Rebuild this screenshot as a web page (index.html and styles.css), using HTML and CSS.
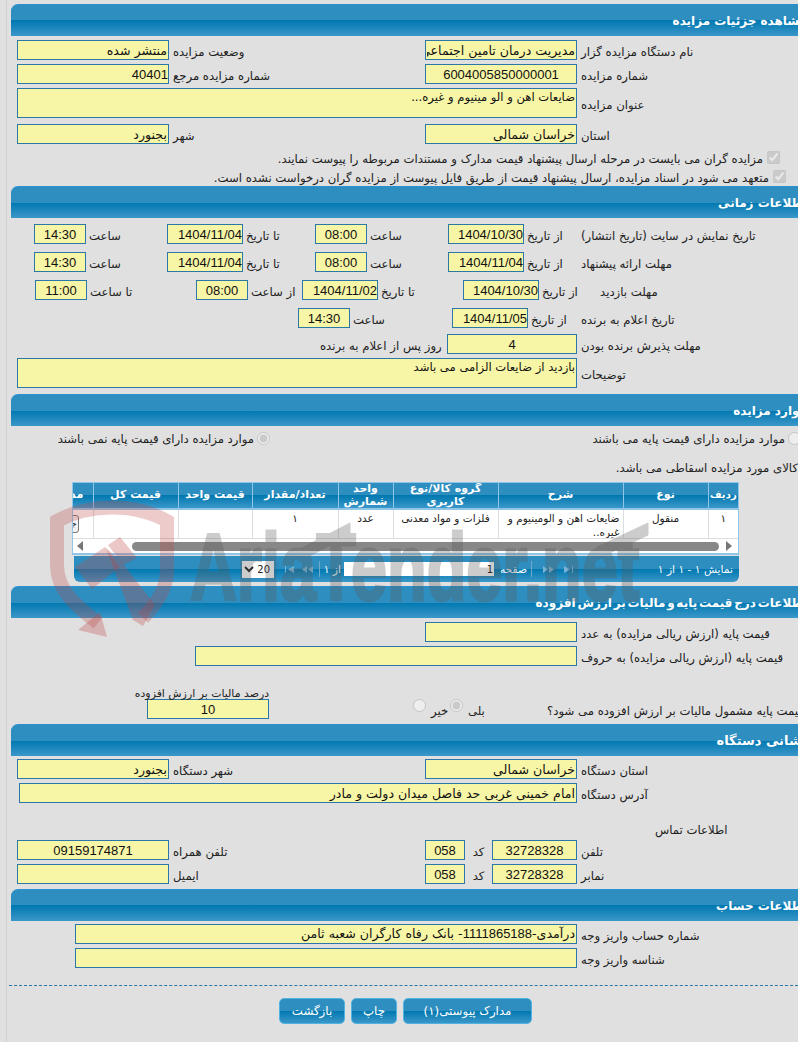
FILE: index.html
```html
<!DOCTYPE html>
<html lang="fa">
<head>
<meta charset="utf-8">
<title>مشاهده جزئیات مزایده</title>
<link rel="stylesheet" href="styles.css">
</head>
<body>
<main class="page">

<section class="sec first">
  <h2 class="sec-title">مشاهده جزئیات مزایده</h2>
  <div class="body b1">
    <div class="row two">
      <input class="f" readonly dir="rtl" value="منتشر شده"><label>وضعیت مزایده</label>
      <input class="f" readonly dir="rtl" value="مدیریت درمان تامین اجتماعی خراسان شمالی"><label>نام دستگاه مزایده گزار</label>
    </div>
    <div class="row two">
      <input class="f n" readonly dir="rtl" value="40401"><label>شماره مزایده مرجع</label>
      <input class="f n c" readonly value="6004005850000001"><label>شماره مزایده</label>
    </div>
    <div class="row wide tall">
      <textarea class="f area" readonly dir="rtl">ضایعات اهن و الو مینیوم و غیره...</textarea><label>عنوان مزایده</label>
    </div>
    <div class="row two">
      <input class="f" readonly dir="rtl" value="بجنورد"><label>شهر</label>
      <input class="f" readonly dir="rtl" value="خراسان شمالی"><label>استان</label>
    </div>
    <div class="check c1"><input type="checkbox" checked disabled><span>مزایده گران می بایست در مرحله ارسال پیشنهاد قیمت مدارک و مستندات مربوطه را پیوست نمایند.</span></div>
    <div class="check c2"><input type="checkbox" checked disabled><span>متعهد می شود در اسناد مزایده، ارسال پیشنهاد قیمت از طریق فایل پیوست از مزایده گران درخواست نشده است.</span></div>
  </div>
</section>

<section class="sec">
  <h2 class="sec-title">اطلاعات زمانی</h2>
  <div class="body b2">
    <div class="row t-a">
      <input class="f n c" readonly value="14:30"><label>ساعت</label>
      <input class="f n" readonly dir="rtl" value="1404/11/04"><label>تا تاریخ</label>
      <input class="f n c" readonly value="08:00"><label>ساعت</label>
      <input class="f n" readonly dir="rtl" value="1404/10/30"><label>از تاریخ</label>
      <label>تاریخ نمایش در سایت (تاریخ انتشار)</label>
    </div>
    <div class="row t-a">
      <input class="f n c" readonly value="14:30"><label>ساعت</label>
      <input class="f n" readonly dir="rtl" value="1404/11/04"><label>تا تاریخ</label>
      <input class="f n c" readonly value="08:00"><label>ساعت</label>
      <input class="f n" readonly dir="rtl" value="1404/11/04"><label>از تاریخ</label>
      <label>مهلت ارائه پیشنهاد</label>
    </div>
    <div class="row t-b">
      <input class="f n c" readonly value="11:00"><label>تا ساعت</label>
      <input class="f n c" readonly value="08:00"><label>از ساعت</label>
      <input class="f n" readonly dir="rtl" value="1404/11/02"><label>تا تاریخ</label>
      <input class="f n" readonly dir="rtl" value="1404/10/30"><label>از تاریخ</label>
      <label>مهلت بازدید</label>
    </div>
    <div class="row t-c">
      <input class="f n c" readonly value="14:30"><label>ساعت</label>
      <input class="f n" readonly dir="rtl" value="1404/11/05"><label>از تاریخ</label>
      <label>تاریخ اعلام به برنده</label>
    </div>
    <div class="row t-d">
      <label class="end">روز پس از اعلام به برنده</label>
      <input class="f n c" readonly value="4"><label>مهلت پذیرش برنده بودن</label>
    </div>
    <div class="row wide tall">
      <textarea class="f area" readonly dir="rtl">بازدید از ضایعات الزامی می باشد</textarea><label>توضیحات</label>
    </div>
  </div>
</section>

<section class="sec">
  <h2 class="sec-title">موارد مزایده</h2>
  <div class="body b3">
    <div class="radios">
      <span>موارد مزایده دارای قیمت پایه نمی باشند</span><input type="radio" name="p" checked disabled>
      <span>موارد مزایده دارای قیمت پایه می باشند</span><input type="radio" name="p2" disabled>
    </div>
    <p class="note">کالای مورد مزایده اسقاطی می باشد.</p>
    <div class="grid">
      <table dir="rtl">
        <colgroup><col class="g1"><col class="g2"><col class="g3"><col class="g4"><col class="g5"><col class="g6"><col class="g7"><col class="g8"><col class="g9"></colgroup>
        <thead><tr><th>ردیف</th><th>نوع</th><th>شرح</th><th>گروه کالا/نوع کاربری</th><th>واحد شمارش</th><th>تعداد/مقدار</th><th>قیمت واحد</th><th>قیمت کل</th><th>مدارک</th></tr></thead>
        <tbody><tr><td>۱</td><td>منقول</td><td class="desc"><div class="clamp">ضایعات اهن و الومینیوم و غیره..</div></td><td>فلزات و مواد معدنی</td><td>عدد</td><td>۱</td><td></td><td></td><td class="btn-cell"><button class="mini">جزئیات</button></td></tr></tbody>
      </table>
      <div class="hscroll"><i class="arr-l"></i><b class="thumb"></b><i class="arr-r"></i></div>
    </div>
    <div class="pager">
      <select class="pg-size" dir="rtl"><option>20</option></select>
      <svg class="ic i1" viewBox="0 0 9 7"><path d="M0 0h1v7H0zM9 0v7L3 3.500z"/></svg>
      <svg class="ic i2" viewBox="0 0 11 7"><path d="M5 0v7L0 3.500zM11 0v7L6 3.500z"/></svg>
      <span class="sep s1"></span>
      <span class="pg-t t1">از ۱</span>
      <input class="pg-in" readonly dir="rtl" value="1">
      <span class="pg-t t2">صفحه</span>
      <span class="sep s2"></span>
      <svg class="ic i3" viewBox="0 0 11 7"><path d="M0 0v7l5-3.500zM6 0v7l5-3.500z"/></svg>
      <svg class="ic i4" viewBox="0 0 9 7"><path d="M0 0v7l6-3.500zM8 0h1v7H8z"/></svg>
      <span class="pg-info">نمایش ۱ - ۱ از ۱</span>
    </div>
  </div>
</section>

<section class="sec">
  <h2 class="sec-title tight">اطلاعات درج قیمت پایه و مالیات بر ارزش افزوده</h2>
  <div class="body b4">
    <div class="row p-a"><input class="f" readonly><label>قیمت پایه (ارزش ریالی مزایده) به عدد</label></div>
    <div class="row p-b"><input class="f" readonly><label>قیمت پایه (ارزش ریالی مزایده) به حروف</label></div>
    <div class="row tax">
      <div class="tax-cell"><span class="tax-cap">درصد مالیات بر ارزش افزوده</span><input class="f n c" readonly value="10"></div>
      <span></span>
      <input type="radio" name="v" disabled><label>خیر</label>
      <input type="radio" name="v" checked disabled><label>بلی</label>
      <label>قیمت پایه مشمول مالیات بر ارزش افزوده می شود؟</label>
    </div>
  </div>
</section>

<section class="sec">
  <h2 class="sec-title loose">نشانی دستگاه</h2>
  <div class="body b5">
    <div class="row two">
      <input class="f" readonly dir="rtl" value="بجنورد"><label>شهر دستگاه</label>
      <input class="f" readonly dir="rtl" value="خراسان شمالی"><label>استان دستگاه</label>
    </div>
    <div class="row addr"><input class="f" readonly dir="rtl" value="امام خمینی غربی حد فاصل میدان دولت و مادر"><label>آدرس دستگاه</label></div>
    <p class="contact">اطلاعات تماس</p>
    <div class="row tel">
      <input class="f n c" readonly value="09159174871"><label>تلفن همراه</label>
      <input class="f n c" readonly value="058"><label class="mid">کد</label>
      <input class="f n c" readonly value="32728328"><label>تلفن</label>
    </div>
    <div class="row tel">
      <input class="f" readonly><label>ایمیل</label>
      <input class="f n c" readonly value="058"><label class="mid">کد</label>
      <input class="f n c" readonly value="32728328"><label>نمابر</label>
    </div>
  </div>
</section>

<section class="sec">
  <h2 class="sec-title">اطلاعات حساب</h2>
  <div class="body b6">
    <div class="row acc"><div class="f line" dir="rtl">درآمدی-<span class="d">1111865188</span>- بانک رفاه کارگران شعبه ثامن</div><label>شماره حساب واریز وجه</label></div>
    <div class="row acc"><input class="f" readonly><label>شناسه واریز وجه</label></div>
  </div>
</section>

<div class="actions">
  <button class="act a-back">بازگشت</button>
  <button class="act a-print">چاپ</button>
  <button class="act a-docs">مدارک پیوستی(۱)</button>
</div>
</main>

<svg class="wm" viewBox="0 0 798 700" aria-hidden="true">
  <g class="wm-logo">
    <path class="wm-line" d="M98 623C75 605 57 590 57 565V521C90 503 135 503 167 521V570C167 590 155 605 143 618"/>
    <path d="M106 548L120 560L155 605L143 626L133 620zM107 637L100 612L78 630z"/>
    <path d="M75 567L105 547L120 567L92 589zM108 545L120 537L137 558L123 565z"/>
  </g>
  <g class="wm-word">
    <text class="wm-text" transform="translate(190 600) scale(.69 1)">AriaTender.net</text>
    <path d="M298 550L350 523L350 535L298 562zM597 547L648 523L648 535L597 559z"/>
  </g>
</svg>
</body>
</html>
```
FILE: styles.css
```css
* { box-sizing: border-box; }
html, body { margin: 0; height: 1042px; overflow: hidden; background: #e0e0e0; }
body { position: relative; font-family: "DejaVu Sans", sans-serif; font-size: 11.7px; color: #222; }
.page { width: 805px; margin-left: 6px; padding: 4px 0 0 4px; border-left: 1px solid #cfcfcf; height: 1042px; }

.sec-title {
  margin: 0; height: 32px; line-height: 32px; padding-right: 4px;
  direction: rtl; font-size: 12px; font-weight: bold; color: #fff;
  background: linear-gradient(#2e8ebf 0, #2e8ebf 50%, #0078b0 50%, #3b97c9 100%);
  border-top: 1px solid #2b90d0; border-top-left-radius: 7px;
}
.sec-title.tight { word-spacing: -2.4px; }
.sec-title.loose { font-size: 13px; }
.b1 { height: 150px; padding-top: 4px; }
.b2 { height: 176px; padding-top: 6px; }
.b3 { height: 160px; }
.b4 { height: 106px; padding-top: 4px; }
.b5 { height: 133px; padding-top: 3px; }
.b6 { padding-top: 3px; }

.row { display: grid; height: 20px; margin-bottom: 4px; align-items: center; }
.row label { padding-left: 4px; white-space: nowrap; direction: rtl; text-align: left; padding-top: 3px; }
.f {
  width: 100%; height: 20px; padding: 0 1px; border: 1px solid #2b78a8; border-radius: 0; outline: 0;
  background: #f7f5a6; color: #111; font: 12.6px "DejaVu Sans", sans-serif;
}
.f.n { padding: 0; font: 13px "Liberation Sans", sans-serif; }
.f.c { text-align: center; }
.line { line-height: 18px; white-space: nowrap; overflow: hidden; }
.d { font: 13px "Liberation Sans", sans-serif; }
.area { display: block; height: 30px; padding-top: 2px; resize: none; overflow: hidden; line-height: 13px; font-size: 11.6px; }

.two { margin-left: 6px; grid-template-columns: 152px 256px 152px auto; }
.wide { margin-left: 6px; grid-template-columns: 560px auto; }
.tall { height: 30px; margin-bottom: 6px; }

.check { display: flex; direction: rtl; height: 19px; align-items: center; }
.check input { margin: 0 0 0 4px; width: 13px; height: 13px; flex: none; }
.check span { padding-top: 3px; white-space: nowrap; }
.c1 { padding-right: 31px; }
.c2 { padding-right: 25px; }

.t-a { margin-left: 23px; margin-bottom: 8px; grid-template-columns: 52px 81px 76px 72px 52px 81px 76px 57px auto; }
.t-b { margin-left: 24px; margin-bottom: 8px; grid-template-columns: 52px 109px 52px 54px 76px 85px 76px 61px auto; }
.t-c { margin-left: 287px; margin-bottom: 6px; grid-template-columns: 52px 102px 76px 53px auto; }
.t-d { margin-left: 309px; grid-template-columns: 127px 130px auto; }
.t-d label.end { padding-left: 0; }
.t-a label, .t-b label, .t-c label { padding-left: 3px; }
.t-a label:last-child, .t-b label:last-child, .t-c label:last-child { padding-left: 0; }

.radios { display: grid; grid-template-columns: 203px 13px 518px 13px; margin-left: 43px; height: 22px; padding-top: 2px; align-items: center; direction: ltr; }
.radios span { direction: rtl; text-align: right; white-space: nowrap; padding-top: 1px; padding-right: 3px; }
.radios input { margin: 0; width: 13px; height: 13px; }
.note { margin: 12px 0 0; height: 22px; direction: rtl; padding-right: 13px; white-space: nowrap; line-height: 16px; }

.grid { width: 667px; margin-left: 61px; height: 73px; border: 1px solid #8fc6e8; border-bottom-width: 2px; background: #fff; overflow: hidden; direction: rtl; position: relative; }
.grid table { border-collapse: collapse; table-layout: fixed; width: 699px; font-size: 10.5px; }
.g1 { width: 30px; } .g2 { width: 85px; } .g3 { width: 125px; } .g4 { width: 105px; } .g5 { width: 55px; }
.g6 { width: 86px; } .g7 { width: 74px; } .g8 { width: 85px; } .g9 { width: 54px; }
.grid th {
  height: 26px; padding: 0; border-left: 1px solid #8fc6e8; border-bottom: 2px solid #8fc6e8;
  color: #fff; font-size: 11px; line-height: 12.5px; font-weight: bold; overflow: hidden; white-space: normal;
  background: linear-gradient(#2e8ebf 0, #2e8ebf 50%, #0078b0 50%, #3b97c9 100%);
}
.grid th:first-child { font-size: 10.2px; }
.grid td { height: 29px; padding: 1px 3px 0; vertical-align: top; text-align: center; border-left: 1px solid #ddd; border-bottom: 1px solid #ddd; line-height: 14px; overflow: hidden; }
.grid td.desc { text-align: right; }
.clamp { height: 26px; }
.grid td.btn-cell { padding: 5px 14px 0 0; border-left: 0; }
.mini { display: block; width: 50px; height: 18px; padding: 0 1px; border: 1px solid #777; border-radius: 3px; background: #f3f3f3; font: 9px "DejaVu Sans", sans-serif; text-align: right; color: #222; }
.hscroll { display: flex; align-items: center; height: 15px; padding: 0 6px 0 4px; direction: ltr; }
.thumb { display: block; width: 589px; height: 9px; margin-left: 49px; border-radius: 5px; background: #888; }
.arr-l { width: 0; height: 0; border: 5px solid transparent; border-left-width: 0; border-right: 6px solid #777; }
.arr-r { width: 0; height: 0; margin-left: 7px; border: 5px solid transparent; border-right-width: 0; border-left: 6px solid #777; }

.pager {
  display: flex; align-items: center; width: 665px; height: 26px; margin: 1px 0 0 63px; padding-left: 168px;
  background: linear-gradient(#2e8ebf 0, #2e8ebf 50%, #0078b0 50%, #3b97c9 100%);
  border-radius: 0 0 6px 6px; color: #f2f9fd; font-size: 10.7px;
}
.pg-size { width: 32px; height: 17px; padding: 0; border: 0; background: #fff; font: 10px "DejaVu Sans", sans-serif; color: #222; }
.ic { height: 7px; fill: #7ab4d6; flex: none; }
.i1 { width: 9px; margin-left: 11px; }
.i2 { width: 11px; margin-left: 8px; }
.i3 { width: 11px; margin-left: 11px; }
.i4 { width: 9px; margin-left: 10px; }
.sep { width: 1px; height: 16px; background: #6fa9cb; flex: none; }
.s1 { margin-left: 6px; }
.s2 { margin-left: 4px; }
.pg-t { direction: rtl; white-space: nowrap; }
.t1 { width: 16px; margin-left: 5px; }
.t2 { width: 30px; margin-left: 3px; }
.pg-in { width: 150px; height: 14px; margin-left: 3px; padding: 0 1px; border: 0; background: #fff; font: 10px "DejaVu Sans", sans-serif; color: #111; }
.pg-info { direction: rtl; margin-left: auto; padding-right: 6px; white-space: nowrap; }

.p-a { margin-left: 414px; grid-template-columns: 152px auto; }
.p-b { margin-left: 184px; grid-template-columns: 382px auto; }
.tax { margin: 33px 0 0 136px; height: 20px; grid-template-columns: 122px 144px 18px 19px 18px 79px auto; }
.tax-cell { position: relative; }
.tax-cap { position: absolute; right: 0; bottom: 19px; direction: rtl; white-space: nowrap; font-size: 10.9px; line-height: 13px; }
.tax input[type=radio] { margin: 0; width: 13px; height: 13px; align-self: start; }
.tax label { padding-left: 0; }

.addr { margin-left: 8px; grid-template-columns: 558px auto; }
.contact { margin: 20px 0 0 644px; height: 17px; line-height: 14px; direction: rtl; text-align: left; white-space: nowrap; }
.tel { margin-left: 6px; grid-template-columns: 152px 256px 40px 27px 85px auto; }
.tel .mid { padding-left: 0; text-align: center; }
.acc { margin-left: 64px; grid-template-columns: 502px auto; }

.actions {
  position: relative; display: flex; gap: 6px; margin: 17px 0 0 -2px; width: 789px; padding: 12px 0 0 270px;
  border-top: 1px dashed #2b78a8;
}
.act {
  height: 26px; padding: 0; border: 1px solid #4fb2e0; border-radius: 5px; color: #fff; font: 11.85px "DejaVu Sans", sans-serif;
  background: linear-gradient(#2e8ebf 0, #2e8ebf 50%, #0078b0 50%, #3b97c9 100%);
}
.a-back { width: 66px; }
.a-print { width: 46px; }
.a-docs { width: 129px; }

.wm { position: absolute; left: 0; top: 0; width: 798px; height: 700px; pointer-events: none; }
.wm-logo { fill: rgba(190, 70, 70, .3); }
.wm-line { fill: none; stroke: rgba(190, 70, 70, .28); stroke-width: 14; }
.wm-word { fill: #5a5a5a; stroke: #5a5a5a; opacity: .3; }
.wm-text { font: bold 94px "Liberation Sans", sans-serif; stroke-width: 3px; }
```
